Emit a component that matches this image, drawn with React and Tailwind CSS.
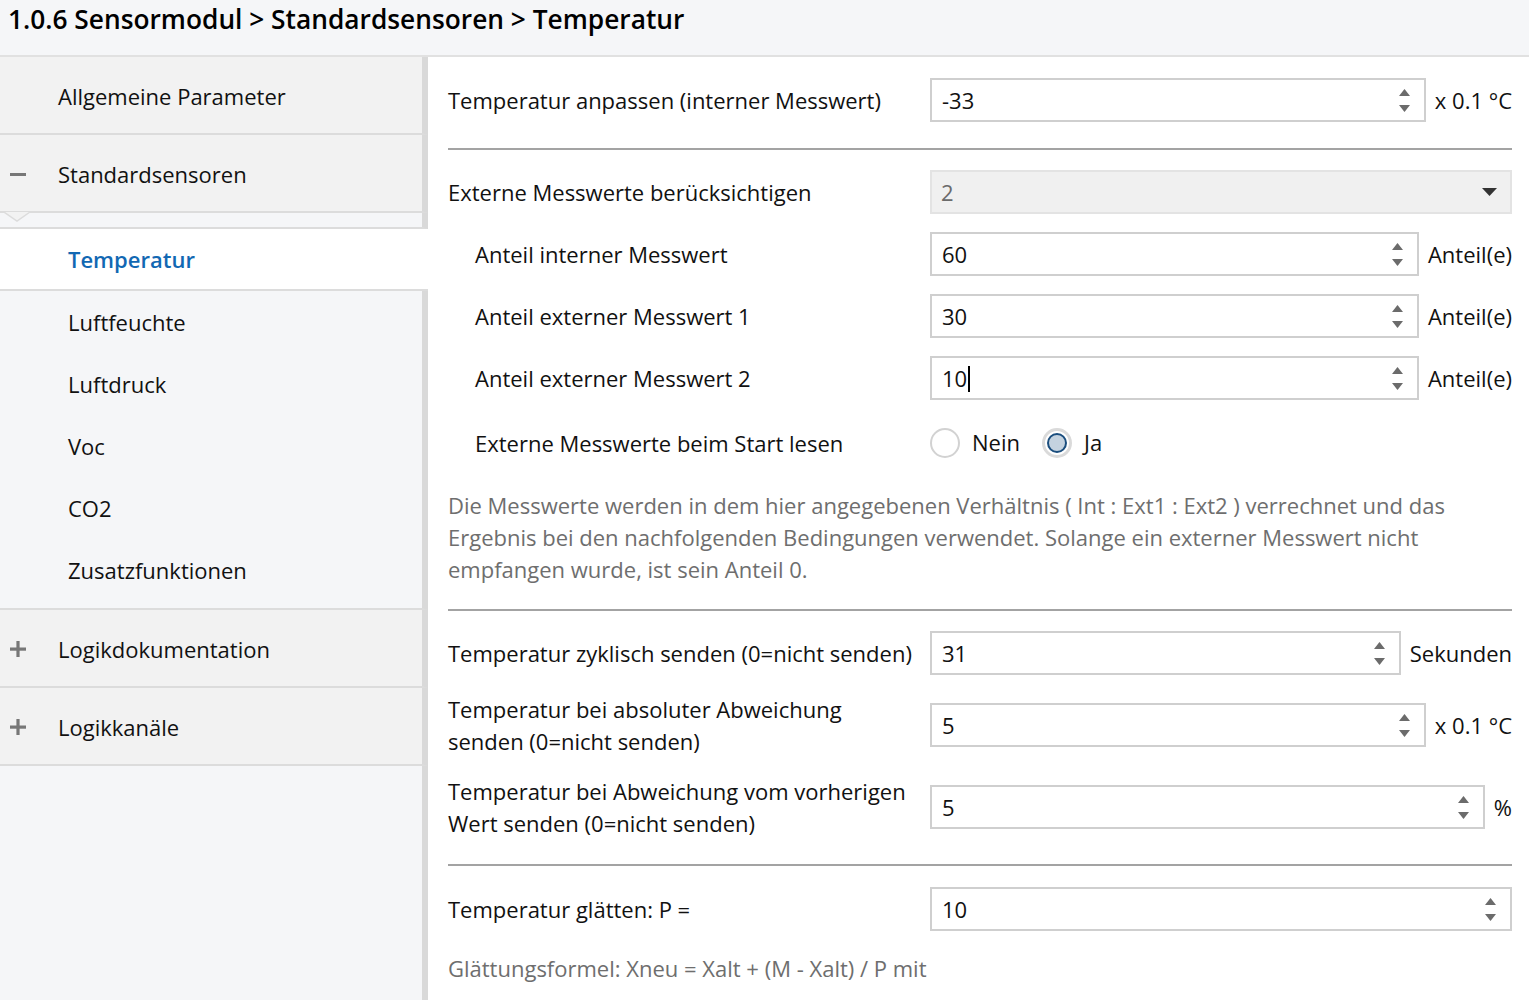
import React from "react";

const font = { fontFamily: '"Open Sans", "Noto Sans", sans-serif' };

function Spinner() {
  return (
    <div className="flex flex-col items-center gap-[9px] pr-[14px]">
      <svg width="11" height="7" viewBox="0 0 11 7">
        <polygon points="5.5,0 11,7 0,7" fill="#6b6b6b" />
      </svg>
      <svg width="11" height="7" viewBox="0 0 11 7">
        <polygon points="0,0 11,0 5.5,7" fill="#6b6b6b" />
      </svg>
    </div>
  );
}

function NumberInput({ value, unit, caret }) {
  return (
    <div className="flex items-center gap-[9px]">
      <div className="flex h-[44px] flex-1 items-center justify-between border-2 border-[#cfcfcf] bg-white pl-[10px]">
        <span className="text-[#111]">
          {value}
          {caret && <span className="ml-[1px] inline-block h-[26px] w-[1.5px] translate-y-[5px] bg-black" />}
        </span>
        <Spinner />
      </div>
      {unit && <span className="whitespace-nowrap text-[#111]">{unit}</span>}
    </div>
  );
}

function Row({ label, indent, children, className = "" }) {
  return (
    <div className={"grid grid-cols-[482px_1fr] items-center " + className}>
      <div className={"leading-[32px] text-[#111] " + (indent ? "pl-[27px]" : "")}>{label}</div>
      <div>{children}</div>
    </div>
  );
}

function Separator({ className = "" }) {
  return <div className={"h-[2px] bg-[#a3a3a3] " + className} />;
}

function SideTop({ label, icon }) {
  return (
    <div className="flex h-[78px] items-center border-b-2 border-r-[6px] border-b-[#dcdcdc] border-r-[#d9d9d9] bg-[#f2f2f2] pt-[2px]">
      <div className="flex w-[58px] justify-start pl-[10px]">
        {icon === "minus" && <div className="h-[3px] w-[16px] bg-[#777]" />}
        {icon === "plus" && (
          <svg width="16" height="16" viewBox="0 0 16 16">
            <rect x="0" y="6.5" width="16" height="3.2" fill="#777" />
            <rect x="6.4" y="0" width="3.2" height="16" fill="#777" />
          </svg>
        )}
      </div>
      <span className="text-[#111]">{label}</span>
    </div>
  );
}

function SideChild({ label }) {
  return (
    <div className="flex h-[62px] items-center pl-[68px] text-[#111]">{label}</div>
  );
}

export default function App() {
  return (
    <div className="flex h-[1000px] w-[1529px] flex-col overflow-hidden bg-white text-[22px]" style={font}>
      <header className="flex h-[57px] shrink-0 items-start border-b-2 border-[#e1e1e1] bg-[#f5f6f8] pl-[8px]">
        <h1 className="pt-[1px] text-[26.3px] font-semibold leading-[36px] text-black">
          1.0.6 Sensormodul &gt; Standardsensoren &gt; Temperatur
        </h1>
      </header>

      <div className="flex flex-1">
        <aside className="flex w-[428px] shrink-0 flex-col bg-[#f5f6f8]">
          <SideTop label="Allgemeine Parameter" />
          <SideTop label="Standardsensoren" icon="minus" />
          <div className="relative h-[16px] border-b-2 border-r-[6px] border-b-[#dcdcdc] border-r-[#d9d9d9]">
            <svg className="absolute left-[4px] top-[-2px]" width="28" height="12" viewBox="0 0 28 12">
              <polyline points="0,1 13,10 26,1" fill="#f2f2f2" stroke="#dcdcdc" strokeWidth="1.5" />
            </svg>
          </div>
          <div className="flex h-[62px] items-center border-b-2 border-b-[#dcdcdc] bg-white pl-[68px] font-semibold text-[#1268b3]">
            Temperatur
          </div>
          <div className="flex flex-col border-b-2 border-r-[6px] border-b-[#dcdcdc] border-r-[#d9d9d9] pb-[7px]">
            <SideChild label="Luftfeuchte" />
            <SideChild label="Luftdruck" />
            <SideChild label="Voc" />
            <SideChild label="CO2" />
            <SideChild label="Zusatzfunktionen" />
          </div>
          <SideTop label="Logikdokumentation" icon="plus" />
          <SideTop label="Logikkanäle" icon="plus" />
          <div className="flex-1 border-r-[6px] border-r-[#d9d9d9]" />
        </aside>

        <main className="flex flex-1 flex-col pl-[20px] pr-[17px] pt-[21px]">
          <Row label="Temperatur anpassen (interner Messwert)">
            <NumberInput value="-33" unit="x 0.1 °C" />
          </Row>
          <Separator className="mt-[26px]" />
          <Row label="Externe Messwerte berücksichtigen" className="mt-[20px]">
            <div className="flex h-[44px] items-center justify-between border-2 border-[#e3e3e3] bg-[#f0f0f0] pl-[9px] pr-[13px] text-[#6b6b6b]">
              <span>2</span>
              <svg width="15" height="8" viewBox="0 0 15 8">
                <polygon points="0,0 15,0 7.5,8" fill="#333" />
              </svg>
            </div>
          </Row>
          <Row label="Anteil interner Messwert" indent className="mt-[18px]">
            <NumberInput value="60" unit="Anteil(e)" />
          </Row>
          <Row label="Anteil externer Messwert 1" indent className="mt-[18px]">
            <NumberInput value="30" unit="Anteil(e)" />
          </Row>
          <Row label="Anteil externer Messwert 2" indent className="mt-[18px]">
            <NumberInput value="10" unit="Anteil(e)" caret />
          </Row>
          <Row label="Externe Messwerte beim Start lesen" indent className="mt-[26px]">
            <div className="flex items-center text-[#111]">
              <div className="h-[30px] w-[30px] rounded-full border-2 border-[#d2d2d2] bg-white" />
              <span className="ml-[12px]">Nein</span>
              <div className="ml-[22px] flex h-[30px] w-[30px] items-center justify-center rounded-full border-[3px] border-[#dadada] bg-white">
                <div className="h-[20px] w-[20px] rounded-full border-2 border-[#1b4e7e] bg-[#c4d2df]" />
              </div>
              <span className="ml-[12px]">Ja</span>
            </div>
          </Row>
          <p className="mt-[30px] leading-[32px] text-[#6e6e6e]">
            Die Messwerte werden in dem hier angegebenen Verhältnis ( Int : Ext1 : Ext2 ) verrechnet und das
            <br />
            Ergebnis bei den nachfolgenden Bedingungen verwendet. Solange ein externer Messwert nicht
            <br />
            empfangen wurde, ist sein Anteil 0.
          </p>
          <Separator className="mt-[24px]" />
          <Row label={<span className="whitespace-nowrap">Temperatur zyklisch senden (0=nicht senden)</span>} className="mt-[20px]">
            <NumberInput value="31" unit="Sekunden" />
          </Row>
          <Row
            label={<>Temperatur bei absoluter Abweichung<br />senden (0=nicht senden)</>}
            className="mt-[18px]"
          >
            <NumberInput value="5" unit="x 0.1 °C" />
          </Row>
          <Row
            label={<>Temperatur bei Abweichung vom vorherigen<br />Wert senden (0=nicht senden)</>}
            className="mt-[18px]"
          >
            <NumberInput value="5" unit="%" />
          </Row>
          <Separator className="mt-[25px]" />
          <Row label="Temperatur glätten: P =" className="mt-[21px]">
            <NumberInput value="10" />
          </Row>
          <p className="mt-[21px] leading-[32px] text-[#6e6e6e]">
            Glättungsformel: Xneu = Xalt + (M - Xalt) / P mit
          </p>
        </main>
      </div>
    </div>
  );
}
